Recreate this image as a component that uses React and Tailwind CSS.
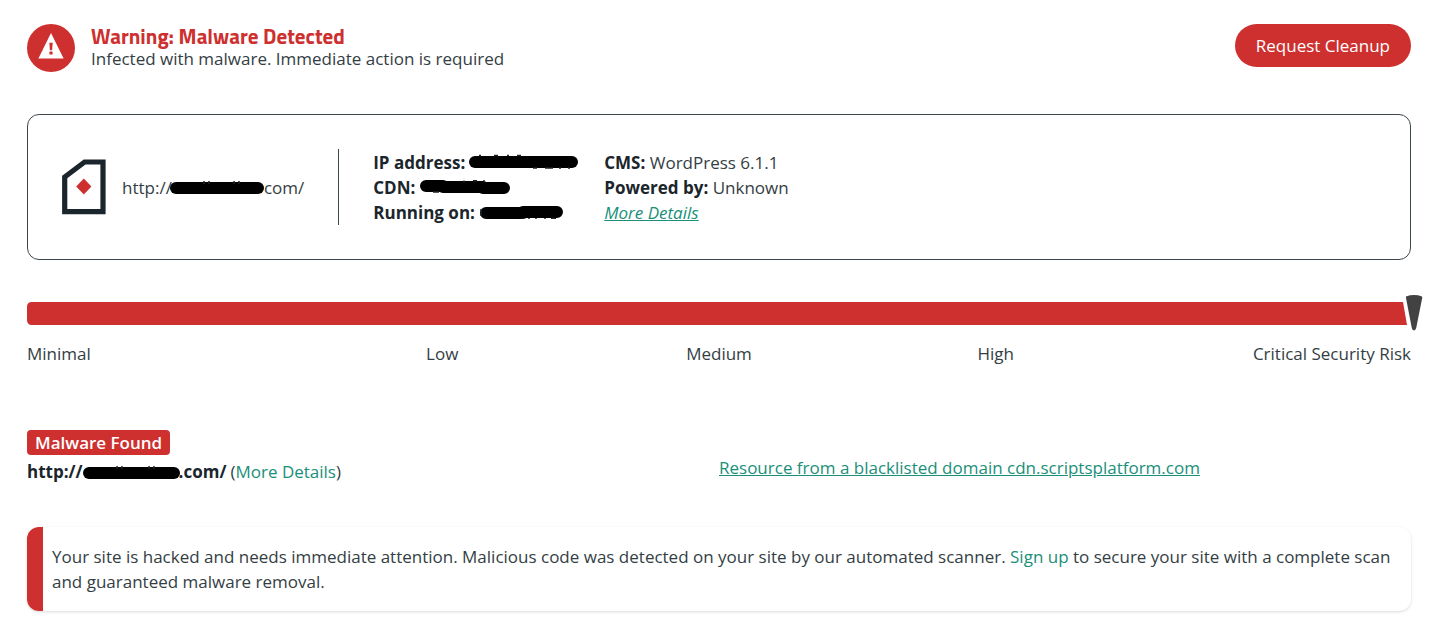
const linkClass = "text-[#1a8f79]";

function WarningIcon() {
  return (
    <svg viewBox="0 0 48 48" className="size-12 shrink-0" aria-hidden="true">
      <circle cx="24" cy="24" r="24" fill="#cd302f" />
      <path d="M24 9 L36.6 34.4 H11.4 Z" fill="#fff" />
      <path d="M22.3 18.7h3.4l-.6 7.5h-2.2z" fill="#cd302f" />
      <rect x="22.4" y="27.6" width="3.2" height="2.9" rx=".6" fill="#cd302f" />
    </svg>
  );
}

function SiteIcon() {
  return (
    <svg viewBox="0 0 44 56" className="h-14 w-11 shrink-0" aria-hidden="true">
      <path d="M2.7 18 L22.6 3 H41 V52.6 H2.7 Z" fill="none" stroke="#1b262c" strokeWidth="5.2" />
      <path d="M21.8 19.6 L29.4 27.5 L21.8 35.4 L14.2 27.5 Z" fill="#cd302f" />
    </svg>
  );
}

function Redacted({ className, width, d, marks }) {
  return (
    <svg
      viewBox={`0 0 ${width} 16`}
      className={`inline-block h-4 align-middle ${className}`}
      role="img"
      aria-label="Hidden"
    >
      <path d={d} fill="none" stroke="#000" strokeWidth="12" strokeLinecap="round" strokeLinejoin="round" />
      <path d={marks} fill="none" stroke="#1b262c" strokeWidth="1.5" />
    </svg>
  );
}

const levels = [
  ["Minimal", "text-left"],
  ["Low", "text-center"],
  ["Medium", "text-center"],
  ["High", "text-center"],
  ["Critical Security Risk", "text-right whitespace-nowrap"],
];

export default function App() {
  return (
    <main className="bg-white pt-6 pr-[29px] pb-[22px] pl-[27px] font-['Open_Sans',sans-serif] text-[17px] leading-[25px] text-[#333e44]">
      <header className="flex items-start justify-between">
        <div className="flex gap-4">
          <WarningIcon />
          <div className="pt-px">
            <h1 className="font-['Titillium_Web','Open_Sans',sans-serif] text-[21px] leading-[22px] font-bold text-[#cd302f]">
              Warning: Malware Detected
            </h1>
            <p className="leading-[23px]">Infected with malware. Immediate action is required</p>
          </div>
        </div>
        <button type="button" className="h-[43px] rounded-full bg-[#cd302f] px-[21px] text-white">
          Request Cleanup
        </button>
      </header>

      <section className="mt-[42px] flex items-center rounded-xl border border-[#3c474c] px-[34px] py-[34px]">
        <SiteIcon />
        <div className="ml-4 flex items-center whitespace-nowrap">
          http://
          <Redacted
            className="-ml-[2px] w-[94px]"
            width={94}
            d="M6 9H88"
            marks="M34 2v3M39 2v3M64 2v3M69 2v3"
          />
          com/
        </div>
        <div className="ml-[34px] h-19 w-px bg-[#3c474c]" />
        <dl className="ml-[34px] w-[231px] whitespace-nowrap">
          {[
            ["IP address:", "w-[110px]", 110, "M6 8H103", "M10 1.6h2M25 1.6h4M38 1.6h2M48 1.6h4M64 14h4M76 14h8M90 14h2M99 14h2"],
            ["CDN:", "w-[91px]", 91, "M7 7H24M24 8H64M64 9H85", "M45 1.5v2M54 1.7h4M64 2h2M14 13h6"],
            ["Running on:", "w-[84px]", 84, "M7 9H44M44 8H78", "M2 5v7M43 14v1M50 14v1M57 14v1M66 14v1M72 14.3h5"],
          ].map(([label, size, width, d, marks]) => (
            <div key={label} className="flex items-center gap-1">
              <dt className="font-bold text-[#1b262c]">{label}</dt>
              <dd className="flex">
                <Redacted className={size} width={width} d={d} marks={marks} />
              </dd>
            </div>
          ))}
        </dl>
        <div className="whitespace-nowrap">
          <p>
            <b className="text-[#1b262c]">CMS:</b> WordPress 6.1.1
          </p>
          <p>
            <b className="text-[#1b262c]">Powered by:</b> Unknown
          </p>
          <p>
            <a href="#details" className={`${linkClass} italic underline`}>
              More Details
            </a>
          </p>
        </div>
      </section>

      <section className="mt-[42px]" aria-label="Security risk level">
        <div className="relative">
          <svg viewBox="0 0 1384 23" preserveAspectRatio="xMaxYMid slice" className="block h-[23px] w-full" aria-hidden="true">
            <path d="M5 0H1376L1380 23H5Q0 23 0 18V5Q0 0 5 0Z" fill="#cd302f" />
          </svg>
          <svg viewBox="0 0 18 38" className="absolute -top-2 -right-3 h-[38px] w-[18px]" aria-hidden="true">
            <path d="M1 2.4Q9 -.4 17 2.4Q17.4 3 17.2 4L11.2 34Q10.6 36.4 9 36.4Q7.2 36.4 6.8 34L1 4Z" fill="#424242" />
          </svg>
        </div>
        <div className="mt-4 grid grid-cols-5">
          {levels.map(([name, align]) => (
            <span key={name} className={align}>
              {name}
            </span>
          ))}
        </div>
      </section>

      <section className="mt-16 grid grid-cols-2">
        <div>
          <h2 className="w-fit rounded-[4px] bg-[#cd302f] px-2 font-semibold text-white">Malware Found</h2>
          <div className="mt-1 flex items-center whitespace-nowrap">
            <b className="flex items-center text-[#1b262c]">
              http://
              <Redacted
                className="-mr-[2px] w-[98px]"
                width={98}
                d="M6 9H91"
                marks="M34 2v3M39 2v3M66 2v3M71 2v3"
              />
              .com/
            </b>
            <span className="ml-1">
              (
              <a href="#malware" className={linkClass}>
                More Details
              </a>
              )
            </span>
          </div>
        </div>
        <a href="#resource" className={`${linkClass} self-start pt-[25px] underline`}>
          Resource from a blacklisted domain cdn.scriptsplatform.com
        </a>
      </section>

      <section className="mt-[43px] rounded-xl border-l-16 border-[#cd302f] py-[17px] pr-4 pl-[9px] shadow-[0_1px_3px_rgba(0,0,0,0.15)]">
        Your site is hacked and needs immediate attention. Malicious code was detected on your site by our automated
        scanner.{" "}
        <a href="#signup" className={linkClass}>
          Sign up
        </a>{" "}
        to secure your site with a complete scan and guaranteed malware removal.
      </section>
    </main>
  );
}
